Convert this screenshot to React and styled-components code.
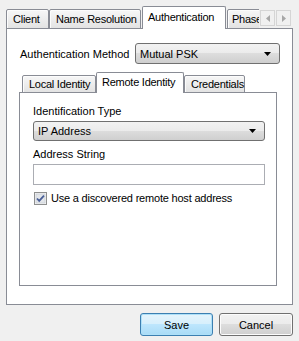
import React from 'react'
import styled, { createGlobalStyle } from 'styled-components'

const GlobalStyle = createGlobalStyle`
  html, body {
    margin: 0;
    padding: 0;
    background: #f0f0f0;
  }
  body {
    font-family: "Liberation Sans", Arial, sans-serif;
    font-size: 11px;
    color: #000;
  }
`

const Dialog = styled.div`
  box-sizing: border-box;
  width: 299px;
  height: 341px;
  padding: 6px 6px 0 6px;
  display: flex;
  flex-direction: column;
`

const TabHeader = styled.div`
  display: flex;
  align-items: flex-end;
  height: ${p => p.h}px;
  margin: 0 0 -1px ${p => p.inset || 0}px;
  position: relative;
  z-index: 1;
`

const TabStrip = styled.div`
  flex: 1;
  min-width: 0;
  height: 100%;
  display: flex;
  align-items: flex-end;
  overflow: hidden;
`

const Tab = styled.div`
  box-sizing: border-box;
  flex: none;
  width: ${p => p.w}px;
  height: ${p => (p.active ? p.h : p.h - 3)}px;
  margin-right: ${p => p.gap || 0}px;
  border: 1px solid #898c95;
  border-bottom: ${p => (p.active ? 'none' : '1px solid #898c95')};
  border-radius: 2px 2px 0 0;
  background: ${p => (p.active
    ? '#fff'
    : 'linear-gradient(#f7f7f7 0%, #ededed 50%, #e3e3e3 100%)')};
  box-shadow: ${p => (p.active ? 'none' : 'inset 1px 1px 0 #fcfcfc')};
  padding: ${p => (p.active ? '0 0 2px 5px' : `0 0 0 ${p.pl || 6}px`)};
  display: flex;
  align-items: center;
  white-space: nowrap;
  letter-spacing: -0.25px;
  position: relative;
  z-index: ${p => (p.active ? 2 : 1)};
`

const Spinner = styled.div`
  display: flex;
  gap: 1px;
  margin: 0 2px 3px 1px;
`

const SpinButton = styled.div`
  box-sizing: border-box;
  width: 15px;
  height: 16px;
  border: 1px solid #d5d5d5;
  background: #f0f0f0;
  display: flex;
  align-items: center;
  justify-content: center;
`

const Panel = styled.div`
  box-sizing: border-box;
  border: 1px solid #898c95;
  background: #fff;
  display: flex;
  flex-direction: column;
  height: ${p => p.h}px;
  margin-right: ${p => p.mr || 0}px;
  padding: ${p => p.pad};
`

const MethodRow = styled.div`
  display: flex;
  align-items: center;
  justify-content: space-between;
  padding-left: 1px;
  margin-bottom: 8px;
`

const Label = styled.div`
  line-height: 13px;
  margin-top: ${p => p.mt || 0}px;
`

const Combo = styled.div`
  box-sizing: border-box;
  width: ${p => (p.w ? `${p.w}px` : '100%')};
  height: ${p => p.h}px;
  margin-top: ${p => p.mt || 0}px;
  border: 1px solid #707070;
  border-radius: 3px;
  background: linear-gradient(#f2f2f2 0%, #ebebeb 50%, #dddddd 50%, #cfcfcf 100%);
  display: flex;
  align-items: center;
  justify-content: space-between;
  padding: 0 8px 0 4px;
`

const TextBox = styled.div`
  box-sizing: border-box;
  height: 21px;
  margin-top: 3px;
  border: 1px solid #abadb3;
  background: #fff;
`

const CheckRow = styled.div`
  display: flex;
  align-items: center;
  gap: 4px;
  margin-top: 7px;
  padding-left: 1px;
  line-height: 13px;
  letter-spacing: -0.2px;
`

const Buttons = styled.div`
  display: flex;
  justify-content: flex-end;
  gap: 6px;
  margin-top: 8px;
`

const Button = styled.div`
  box-sizing: border-box;
  width: ${p => p.w}px;
  height: 23px;
  border: 1px solid ${p => (p.primary ? '#3c7fb1' : '#707070')};
  border-radius: 3px;
  background: ${p => (p.primary
    ? 'linear-gradient(#e5f4fc 0%, #d6effc 50%, #bde6fd 50%, #a9dbf6 100%)'
    : 'linear-gradient(#f2f2f2 0%, #ebebeb 50%, #dddddd 50%, #cfcfcf 100%)')};
  box-shadow: inset 0 0 0 1px ${p => (p.primary ? '#aee0f8' : '#fcfcfc')};
  display: flex;
  align-items: center;
  justify-content: center;
`

const DownArrow = () => (
  <svg width="7" height="4" viewBox="0 0 7 4">
    <path d="M0 0h7L3.5 4z" fill="#000" />
  </svg>
)

const Arrow = ({ dir }) => (
  <svg width="4" height="7" viewBox="0 0 4 7">
    <path d={dir === 'left' ? 'M4 0v7L0 3.5z' : 'M0 0v7l4-3.5z'} fill="#a7a7a7" />
  </svg>
)

const Check = () => (
  <svg width="13" height="13" viewBox="0 0 13 13">
    <rect x="0.5" y="0.5" width="12" height="12" fill="#f4f4f4" stroke="#8e8f8f" />
    <rect x="2" y="2" width="9" height="9" fill="#e3e6ea" stroke="#c4c8d0" strokeWidth="0.6" />
    <path d="M3 6.5l2.2 2.4L10 3.6" fill="none" stroke="#4a5f97" strokeWidth="1.8" />
  </svg>
)

const outerTabs = [
  { name: 'Client', w: 43 },
  { name: 'Name Resolution', w: 92, gap: 1 },
  { name: 'Authentication', w: 84, gap: 1, active: true },
  { name: 'Phase', w: 40, pl: 4 }
]

const innerTabs = [
  { name: 'Local Identity', w: 74 },
  { name: 'Remote Identity', w: 88 },
  { name: 'Credentials', w: 61 }
]

const App = () => {
  return (
    <Dialog>
      <GlobalStyle />
      <TabHeader h={23}>
        <TabStrip>
          {outerTabs.map(t => (
            <Tab key={t.name} w={t.w} gap={t.gap} pl={t.pl} h={23} active={t.active}>{t.name}</Tab>
          ))}
        </TabStrip>
        <Spinner>
          <SpinButton><Arrow dir="left" /></SpinButton>
          <SpinButton><Arrow dir="right" /></SpinButton>
        </Spinner>
      </TabHeader>
      <Panel h={277} pad="14px 12px 18px 12px">
        <MethodRow>
          <span>Authentication Method</span>
          <Combo w={145} h={21}>
            <span>Mutual PSK</span>
            <DownArrow />
          </Combo>
        </MethodRow>
        <TabHeader h={21} inset={3}>
          {innerTabs.map((t, i) => (
            <Tab key={t.name} w={t.w} h={21} active={i === 1}>{t.name}</Tab>
          ))}
        </TabHeader>
        <Panel mr={3} pad="12px 11px 0 13px" style={{ flex: 1 }}>
          <Label>Identification Type</Label>
          <Combo h={20} mt={3}>
            <span>IP Address</span>
            <DownArrow />
          </Combo>
          <Label mt={7}>Address String</Label>
          <TextBox />
          <CheckRow>
            <Check />
            <span>Use a discovered remote host address</span>
          </CheckRow>
        </Panel>
      </Panel>
      <Buttons>
        <Button primary w={73}>Save</Button>
        <Button w={74}>Cancel</Button>
      </Buttons>
    </Dialog>
  )
}

export default App
